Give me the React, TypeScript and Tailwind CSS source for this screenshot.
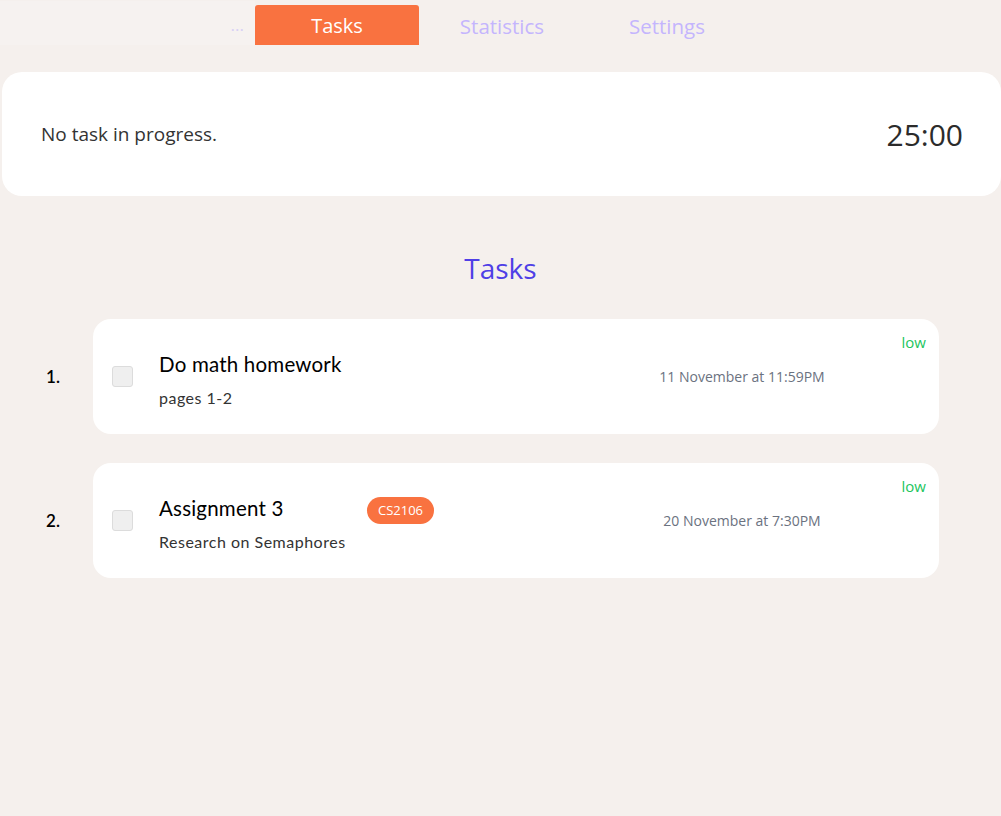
import { useState } from 'react'

const segoe = { fontFamily: '"Open Sans", "Noto Sans", sans-serif' }
const geo = { fontFamily: 'Lato, "Noto Sans", sans-serif' }

const tasks = [
  { id: 1, title: 'Do math homework', desc: 'pages 1-2', tag: null, due: '11 November at 11:59PM', priority: 'low' },
  { id: 2, title: 'Assignment 3', desc: 'Research on Semaphores', tag: 'CS2106', due: '20 November at 7:30PM', priority: 'low' },
]

function TaskRow({ n, task }: { n: number; task: (typeof tasks)[number] }) {
  const [done, setDone] = useState(false)
  return (
    <div className="flex items-center">
      <div className="w-[93px] pl-[46px] text-[17px] font-semibold text-black" style={geo}>
        {n}.
      </div>
      <div className="relative flex h-[115px] w-[846px] items-center rounded-[18px] bg-white">
        <button
          type="button"
          onClick={() => setDone((d) => !d)}
          className="ml-[19px] h-[21px] w-[21px] rounded-[3px] border border-[#dcdcdc] bg-[#efefef]"
          aria-label="Mark done"
        />
        <div className="ml-[26px] mt-[6px] flex w-[208px] flex-col gap-[12px]" style={geo}>
          <span className="text-[20.5px] leading-[24px] tracking-[0.2px] text-black">{task.title}</span>
          <span className="text-[16px] leading-[20px] tracking-[0.5px] text-[#333]">{task.desc}</span>
        </div>
        <div className="mb-[20px] w-[210px]">
          {task.tag && (
            <span
              className="inline-flex h-[27px] items-center rounded-full bg-[#f97240] px-[11px] text-[13px] text-white"
              style={segoe}
            >
              {task.tag}
            </span>
          )}
        </div>
        <div className="flex w-[330px] justify-center text-[14px] text-[#6b7280]" style={segoe}>
          {task.due}
        </div>
        <span className="absolute right-[13px] top-[12px] text-[15px] text-[#22c55e]" style={segoe}>
          {task.priority}
        </span>
      </div>
    </div>
  )
}

export default function App() {
  return (
    <div className="min-h-[816px] bg-[#f5f0ed]" style={segoe}>
      <nav className="flex h-[45px] items-end">
        <div className="flex h-[44px] w-[255px] items-center justify-end bg-[#f6f2f0] pr-[11px] pt-[4px] text-[17px] text-[#d6d0f5]">
          ...
        </div>
        <div className="flex h-[40px] w-[164px] items-center justify-center rounded-t-[3px] bg-[#f97240] pt-[2px] text-[20px] text-white">
          Tasks
        </div>
        <div className="flex h-[40px] w-[166px] items-center justify-center pt-[2px] text-[20.5px] text-[#c4b5fd]">
          Statistics
        </div>
        <div className="flex h-[40px] w-[164px] items-center justify-center pt-[2px] text-[20.5px] text-[#c4b5fd]">
          Settings
        </div>
      </nav>

      <section className="ml-[2px] mt-[27px] flex h-[124px] items-center justify-between rounded-[20px] bg-white pl-[39px] pr-[38px]">
        <span className="text-[19px] text-[#333]">No task in progress.</span>
        <span className="text-[30px] text-[#2b2b2b]">25:00</span>
      </section>

      <h1 className="mt-[52px] text-center text-[28px] leading-[40px] text-[#4f3fe6]">Tasks</h1>

      <div className="mt-[31px] flex flex-col gap-[29px]">
        {tasks.map((t, i) => (
          <TaskRow key={t.id} n={i + 1} task={t} />
        ))}
      </div>
    </div>
  )
}
